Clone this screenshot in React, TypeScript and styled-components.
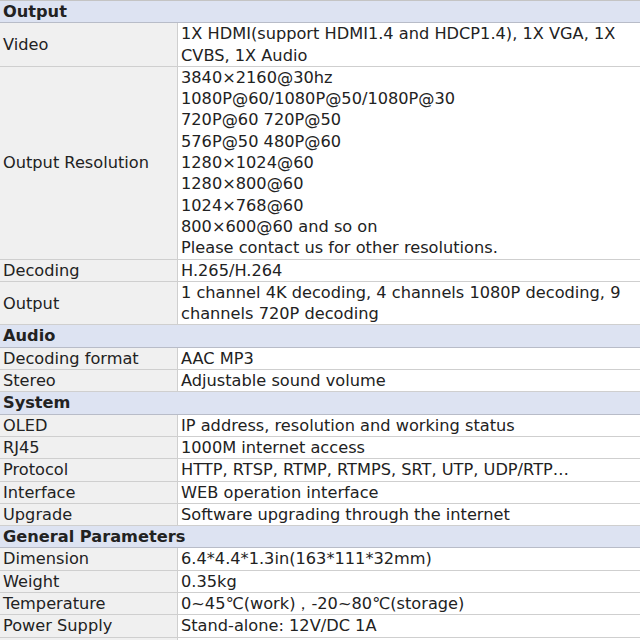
import React from "react";
import styled, { createGlobalStyle } from "styled-components";

const G = createGlobalStyle`
  body { margin: 0; background: #fff; font-family: "DejaVu Sans", Verdana, sans-serif; }
`;
const Table = styled.table`
  width: 640px; border-collapse: collapse; font-size: 16.2px; color: #222; line-height: 21.3px;
`;
const Head = styled.td`
  background: #dde3f2; font-weight: bold; padding: 0 3px; border-top: 1px solid #c4c4c4; border-bottom: 1px solid #b8bcc8; height: 20px;
`;
const Label = styled.td`
  width: 171px; background: #f0f0f0; padding: 0 3px; border: 1px solid #cfcfcf; border-left: none; vertical-align: middle; white-space: nowrap;
`;
const Value = styled.td`
  background: #fff; padding: 0 3px; border: 1px solid #cfcfcf; border-right: none; white-space: nowrap;
`;

type R = [string, string[]] | string;
const rows: R[] = [
  "Output",
  ["Video", ["1X HDMI(support HDMI1.4 and HDCP1.4), 1X VGA, 1X", "CVBS, 1X Audio"]],
  ["Output Resolution", ["3840×2160@30hz", "1080P@60/1080P@50/1080P@30", "720P@60 720P@50", "576P@50 480P@60", "1280×1024@60", "1280×800@60", "1024×768@60", "800×600@60 and so on", "Please contact us for other resolutions."]],
  ["Decoding", ["H.265/H.264"]],
  ["Output", ["1 channel 4K decoding, 4 channels 1080P decoding, 9", "channels 720P decoding"]],
  "Audio",
  ["Decoding format", ["AAC MP3"]],
  ["Stereo", ["Adjustable sound volume"]],
  "System",
  ["OLED", ["IP address, resolution and working status"]],
  ["RJ45", ["1000M internet access"]],
  ["Protocol", ["HTTP, RTSP, RTMP, RTMPS, SRT, UTP, UDP/RTP…"]],
  ["Interface", ["WEB operation interface"]],
  ["Upgrade", ["Software upgrading through the internet"]],
  "General Parameters",
  ["Dimension", ["6.4*4.4*1.3in(163*111*32mm)"]],
  ["Weight", ["0.35kg"]],
  ["Temperature", ["0~45℃(work)，-20~80℃(storage)"]],
  ["Power Supply", ["Stand-alone: 12V/DC 1A"]],
  ["Power Dissipation", ["<5W/1 channel"]],
];

export default function App() {
  return (
    <>
      <G />
      <Table>
        <tbody>
          {rows.map((r, i) =>
            typeof r === "string" ? (
              <tr key={i}><Head colSpan={2}>{r}</Head></tr>
            ) : (
              <tr key={i}>
                <Label>{r[0]}</Label>
                <Value>{r[1].map((l, j) => <div key={j}>{l}</div>)}</Value>
              </tr>
            )
          )}
        </tbody>
      </Table>
    </>
  );
}
